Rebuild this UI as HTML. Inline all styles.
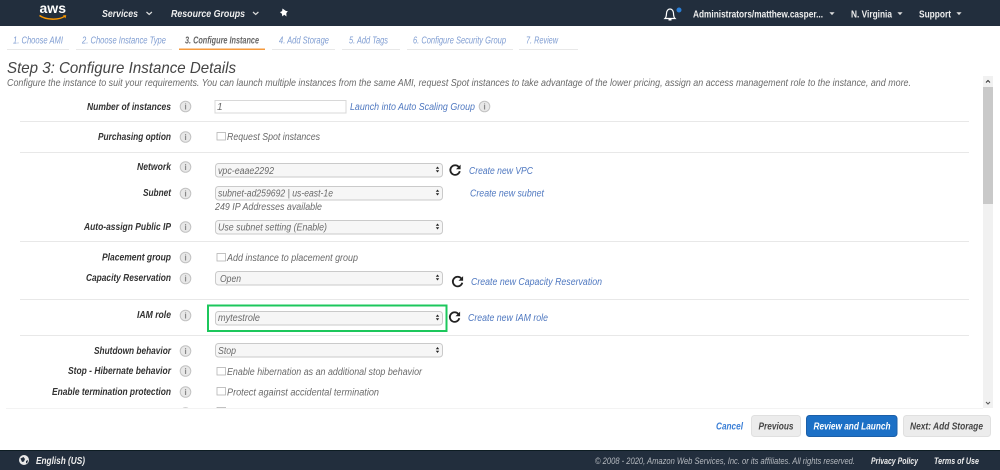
<!DOCTYPE html>
<html><head><meta charset="utf-8"><title>Step 3: Configure Instance Details</title>
<style>
html,body{margin:0;padding:0;background:#fff;width:1000px;height:470px;overflow:hidden}
svg{display:block;position:absolute;left:0;top:0}
text{font-family:"Liberation Sans",sans-serif;font-style:italic}
.l{font-weight:700;font-size:10px;fill:#333}
.v{font-size:10px;fill:#6a6a6a}
.a{font-size:10px;fill:#4f78c0}
.t{font-size:10px;fill:#7f9dd2}
.n{font-style:normal;font-size:10px;fill:#eee;font-weight:700}
.s{fill:#f6f6f6;stroke:#cacaca;stroke-width:1}
.c{fill:#fff;stroke:#b4b4b4;stroke-width:.8}
.h{fill:#e8e8e8}
</style></head><body>
<svg width="1000" height="470" viewBox="0 0 1000 470" xmlns="http://www.w3.org/2000/svg">
<defs>
<g id="info"><circle r="5.300" fill="#e8e8e8" stroke="#c2c2c2" stroke-width="1"/><text x="0" y="3.200" text-anchor="middle" style="font-style:normal;font-weight:700;font-size:8.500px;fill:#888">i</text></g>
<g id="ref"><path d="M3.900 -2.900A4.800 4.800 0 1 0 4.800 1.200" fill="none" stroke="#222" stroke-width="1.800"/><path d="M5.600 -5.400V-0.800H1Z" fill="#222"/></g>
<g id="arr"><path d="M-1.700 -.8L0 -3L1.700 -.8ZM-1.700 .8L0 3L1.700 .8Z" fill="#222"/></g>
<path id="car" d="M-2.600 -1.200H2.600L0 1.600Z" fill="#ddd"/>
<filter id="b"><feGaussianBlur stdDeviation=".3"/></filter>
</defs>

<g filter="url(#b)">
<!-- header -->
<rect width="1000" height="26" fill="#232f3e"/>
<text x="39.500" y="13" textLength="26.500" lengthAdjust="spacingAndGlyphs" style="font-style:normal;font-weight:700;font-size:14px;fill:#fff">aws</text>
<path d="M39.500 15.500C46 20 59 20.500 65 16" fill="none" stroke="#f90" stroke-width="1.400"/>
<path d="M63 15.300L66.300 15.200L65.400 18.400Z" fill="#f90"/>
<text x="102" y="17" textLength="36" lengthAdjust="spacingAndGlyphs" style="font-weight:700;font-size:10.500px;fill:#eee">Services</text>
<path d="M146.500 12l2.700 2.400 2.700-2.400" fill="none" stroke="#ddd" stroke-width="1.200"/>
<text x="171" y="17" textLength="74" lengthAdjust="spacingAndGlyphs" style="font-weight:700;font-size:10.500px;fill:#eee">Resource Groups</text>
<path d="M253 12l2.700 2.400 2.700-2.400" fill="none" stroke="#ddd" stroke-width="1.200"/>
<path d="M282.500 8.500l3.500 2.500 1.800 0-1.500 2.300.2 3.200-2.200-1.700-2 1.600-.4-2.700-2-1.600 2.200-1z" fill="#fff"/>
<path d="M665 18.500c1.300-1.200 1.400-2.800 1.500-5 .1-2.600 1.500-4.500 3.500-4.500s3.400 1.900 3.500 4.500c.1 2.200.2 3.800 1.500 5z" fill="none" stroke="#fff" stroke-width="1.200"/>
<rect x="668.500" y="19" width="3" height="1.500" fill="#fff"/>
<circle cx="679" cy="10" r="2.500" fill="#2b7ed6"/>
<text class="n" x="693" y="17.500" textLength="130" lengthAdjust="spacingAndGlyphs">Administrators/matthew.casper...</text>
<use href="#car" x="832" y="13.500"/>
<text class="n" x="851" y="17.500" textLength="41" lengthAdjust="spacingAndGlyphs">N. Virginia</text>
<use href="#car" x="900" y="13.500"/>
<text class="n" x="919" y="17.500" textLength="32" lengthAdjust="spacingAndGlyphs">Support</text>
<use href="#car" x="959" y="13.500"/>

<!-- tabs -->
<rect x="7" y="49" width="62" height="1" class="h"/>
<rect x="76" y="49" width="96" height="1" class="h"/>
<rect x="179" y="48.500" width="86" height="1.500" fill="#f59a3c"/>
<rect x="272" y="49" width="63" height="1" class="h"/>
<rect x="342" y="49" width="58" height="1" class="h"/>
<rect x="407" y="49" width="106" height="1" class="h"/>
<rect x="519" y="49" width="59" height="1" class="h"/>
<text class="t" x="13" y="43.500" textLength="50" lengthAdjust="spacingAndGlyphs">1. Choose AMI</text>
<text class="t" x="82" y="43.500" textLength="84" lengthAdjust="spacingAndGlyphs">2. Choose Instance Type</text>
<text x="185" y="43.500" textLength="74" lengthAdjust="spacingAndGlyphs" style="font-size:10px;font-weight:700;fill:#666">3. Configure Instance</text>
<text class="t" x="279" y="43.500" textLength="50" lengthAdjust="spacingAndGlyphs">4. Add Storage</text>
<text class="t" x="349" y="43.500" textLength="39" lengthAdjust="spacingAndGlyphs">5. Add Tags</text>
<text class="t" x="413" y="43.500" textLength="93" lengthAdjust="spacingAndGlyphs">6. Configure Security Group</text>
<text class="t" x="526" y="43.500" textLength="32" lengthAdjust="spacingAndGlyphs">7. Review</text>

<!-- heading -->
<text x="7" y="73" textLength="229" lengthAdjust="spacingAndGlyphs" style="font-size:16px;fill:#444">Step 3: Configure Instance Details</text>
<text x="7" y="86" textLength="904" lengthAdjust="spacingAndGlyphs" style="font-size:10px;fill:#6a6a6a">Configure the instance to suit your requirements. You can launch multiple instances from the same AMI, request Spot instances to take advantage of the lower pricing, assign an access management role to the instance, and more.</text>

<!-- separators -->
<rect x="20" y="121" width="949" height="1" class="h"/>
<rect x="20" y="152" width="949" height="1" class="h"/>
<rect x="20" y="241" width="949" height="1" class="h"/>
<rect x="20" y="299" width="949" height="1" class="h"/>
<rect x="20" y="335" width="949" height="1" class="h"/>

<!-- labels -->
<text class="l" x="87" y="110" textLength="84" lengthAdjust="spacingAndGlyphs">Number of instances</text>
<text class="l" x="98" y="140" textLength="73" lengthAdjust="spacingAndGlyphs">Purchasing option</text>
<text class="l" x="137" y="170" textLength="34" lengthAdjust="spacingAndGlyphs">Network</text>
<text class="l" x="143" y="196" textLength="28" lengthAdjust="spacingAndGlyphs">Subnet</text>
<text class="l" x="84" y="230" textLength="87" lengthAdjust="spacingAndGlyphs">Auto-assign Public IP</text>
<text class="l" x="102" y="260.500" textLength="69" lengthAdjust="spacingAndGlyphs">Placement group</text>
<text class="l" x="86" y="281" textLength="85" lengthAdjust="spacingAndGlyphs">Capacity Reservation</text>
<text class="l" x="137" y="318" textLength="34" lengthAdjust="spacingAndGlyphs">IAM role</text>
<text class="l" x="94" y="354" textLength="77" lengthAdjust="spacingAndGlyphs">Shutdown behavior</text>
<text class="l" x="68" y="374" textLength="103" lengthAdjust="spacingAndGlyphs">Stop - Hibernate behavior</text>
<text class="l" x="52" y="395" textLength="119" lengthAdjust="spacingAndGlyphs">Enable termination protection</text>

<!-- info icons -->
<use href="#info" x="185.500" y="106.500"/>
<use href="#info" x="185.500" y="137"/>
<use href="#info" x="185.500" y="167"/>
<use href="#info" x="185.500" y="193.500"/>
<use href="#info" x="185.500" y="227"/>
<use href="#info" x="185.500" y="257.500"/>
<use href="#info" x="185.500" y="278.500"/>
<use href="#info" x="185.500" y="315.500"/>
<use href="#info" x="185.500" y="351"/>
<use href="#info" x="185.500" y="371"/>
<use href="#info" x="185.500" y="392"/>
<use href="#info" x="185.500" y="413"/>
<use href="#info" x="484.500" y="106.500"/>

<!-- number input -->
<rect x="215" y="100.500" width="131" height="12.500" fill="#fff" stroke="#d8d8d8"/>
<text class="v" x="217" y="110">1</text>
<text class="a" x="350" y="110" textLength="125" lengthAdjust="spacingAndGlyphs">Launch into Auto Scaling Group</text>

<!-- checkboxes -->
<rect class="c" x="217" y="132.500" width="8.500" height="7.500"/>
<text class="v" x="227" y="140" textLength="93" lengthAdjust="spacingAndGlyphs">Request Spot instances</text>
<rect class="c" x="217" y="253.500" width="8.500" height="7.500"/>
<text class="v" x="227" y="261" textLength="131" lengthAdjust="spacingAndGlyphs">Add instance to placement group</text>
<rect class="c" x="217" y="367.500" width="8.500" height="7.500"/>
<text class="v" x="227" y="375" textLength="195" lengthAdjust="spacingAndGlyphs">Enable hibernation as an additional stop behavior</text>
<rect class="c" x="217" y="387.500" width="8.500" height="7.500"/>
<text class="v" x="227" y="395.500" textLength="152" lengthAdjust="spacingAndGlyphs">Protect against accidental termination</text>
<rect class="c" x="217" y="407.500" width="8.500" height="7.500"/>

<!-- selects -->
<rect class="s" x="215.500" y="163.500" width="227" height="13.500" rx="3"/>
<use href="#arr" x="437.500" y="169.500"/>
<text class="v" x="218" y="174" textLength="56" lengthAdjust="spacingAndGlyphs">vpc-eaae2292</text>
<use href="#ref" x="455" y="170"/>
<text class="a" x="469" y="174" textLength="64" lengthAdjust="spacingAndGlyphs">Create new VPC</text>

<rect class="s" x="215.500" y="186.500" width="227" height="13.500" rx="3"/>
<use href="#arr" x="437.500" y="192.500"/>
<text class="v" x="218" y="196.500" textLength="115" lengthAdjust="spacingAndGlyphs">subnet-ad259692 | us-east-1e</text>
<text class="a" x="470" y="196.500" textLength="74" lengthAdjust="spacingAndGlyphs">Create new subnet</text>
<text class="v" x="215" y="210" textLength="107" lengthAdjust="spacingAndGlyphs">249 IP Addresses available</text>

<rect class="s" x="215.500" y="220.500" width="227" height="13.500" rx="3"/>
<use href="#arr" x="437.500" y="226.500"/>
<text class="v" x="218" y="230.500" textLength="109" lengthAdjust="spacingAndGlyphs">Use subnet setting (Enable)</text>

<rect class="s" x="215.500" y="271.500" width="227" height="13.500" rx="3"/>
<use href="#arr" x="437.500" y="277.500"/>
<text class="v" x="220" y="282" textLength="21" lengthAdjust="spacingAndGlyphs">Open</text>
<use href="#ref" x="457.500" y="281.500"/>
<text class="a" x="471" y="285" textLength="131" lengthAdjust="spacingAndGlyphs">Create new Capacity Reservation</text>

<rect x="208" y="305.500" width="238.500" height="25.500" fill="#fff" stroke="#1ec75c" stroke-width="2"/>
<rect class="s" x="215.500" y="311.500" width="227" height="13.500" rx="3"/>
<use href="#arr" x="437.500" y="317.500"/>
<text class="v" x="218" y="321" textLength="42" lengthAdjust="spacingAndGlyphs">mytestrole</text>
<use href="#ref" x="454.500" y="317"/>
<text class="a" x="468" y="321" textLength="80" lengthAdjust="spacingAndGlyphs">Create new IAM role</text>

<rect class="s" x="215.500" y="343.500" width="227" height="13.500" rx="3"/>
<use href="#arr" x="437.500" y="350"/>
<text class="v" x="218" y="354" textLength="18" lengthAdjust="spacingAndGlyphs">Stop</text>

<!-- bottom of scroll area -->
<rect x="0" y="408" width="1000" height="43" fill="#fff"/>
<rect x="6" y="408" width="977" height="1" fill="#f3f3f3"/>

<!-- scrollbar -->
<rect x="983" y="76" width="10" height="332" fill="#f1f1f1"/>
<rect x="983" y="87" width="10" height="117" fill="#c9c9c9"/>
<path d="M986 82.500l2-2 2 2" fill="none" stroke="#333" stroke-width="1"/>
<path d="M986 402l2 2 2-2" fill="none" stroke="#555" stroke-width="1"/>

<!-- actions -->
<text x="716" y="429.500" textLength="27" lengthAdjust="spacingAndGlyphs" style="font-size:10px;font-weight:700;fill:#3b7fd6">Cancel</text>
<rect x="751.500" y="415.500" width="49" height="21" rx="3" fill="#ececec" stroke="#e0e0e0"/>
<text x="758.500" y="429.500" textLength="35" lengthAdjust="spacingAndGlyphs" style="font-size:10px;font-weight:700;fill:#444">Previous</text>
<rect x="806.500" y="415.500" width="90.500" height="21" rx="3" fill="#1b6fc6" stroke="#1a5fa8"/>
<text x="813.500" y="429.500" textLength="77" lengthAdjust="spacingAndGlyphs" style="font-size:10px;font-weight:700;fill:#fff">Review and Launch</text>
<rect x="903.500" y="415.500" width="87" height="21" rx="3" fill="#ececec" stroke="#e0e0e0"/>
<text x="910" y="429.500" textLength="73" lengthAdjust="spacingAndGlyphs" style="font-size:10px;font-weight:700;fill:#444">Next: Add Storage</text>

<!-- footer -->
<rect y="451" width="1000" height="19" fill="#232f3e"/>
<rect y="450" width="1000" height="1" fill="#111a24"/>
<circle cx="24" cy="460" r="5" fill="#e8e8e8"/>
<path d="M20.500 458.500l3-1.500 1.500 2-1 2.500-2 .5zM26 461l2-1-.5 2.500-1.500 1z" fill="#232f3e"/>
<text x="36" y="464" textLength="49" lengthAdjust="spacingAndGlyphs" style="font-size:10px;font-weight:700;fill:#eee">English (US)</text>
<text x="595" y="464" textLength="260" lengthAdjust="spacingAndGlyphs" style="font-size:9.500px;fill:#b5b9bf">© 2008 - 2020, Amazon Web Services, Inc. or its affiliates. All rights reserved.</text>
<text x="871" y="464" textLength="47" lengthAdjust="spacingAndGlyphs" style="font-size:9.500px;font-weight:700;fill:#eee">Privacy Policy</text>
<text x="934" y="464" textLength="45" lengthAdjust="spacingAndGlyphs" style="font-size:9.500px;font-weight:700;fill:#eee">Terms of Use</text>
</g>
</svg>
</body></html>
